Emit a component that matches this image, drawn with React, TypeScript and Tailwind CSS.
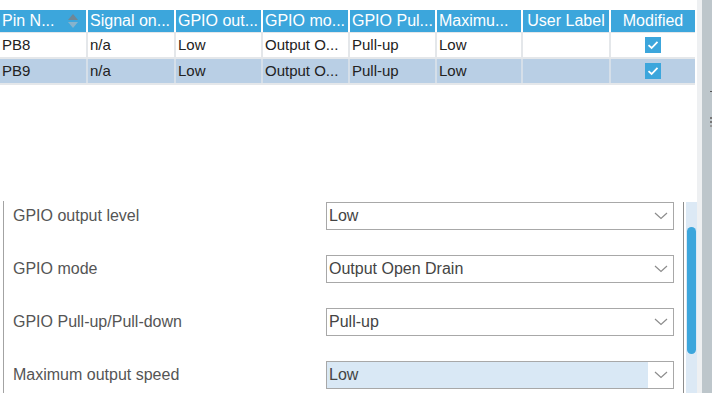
import React from "react";

// Column widths for the pin table (px)
const COLS = [
  { title: "Pin N...", w: "w-[86px]", align: "text-left", sort: true },
  { title: "Signal on...", w: "w-[86px]", align: "text-left" },
  { title: "GPIO out...", w: "w-[85px]", align: "text-left" },
  { title: "GPIO mo...", w: "w-[85px]", align: "text-left" },
  { title: "GPIO Pul...", w: "w-[85px]", align: "text-left" },
  { title: "Maximu...", w: "w-[84px]", align: "text-left" },
  { title: "User Label", w: "w-[86px]", align: "text-center" },
  { title: "Modified", w: "w-[84px]", align: "text-center" },
];

const ROWS = [
  { cells: ["PB8", "n/a", "Low", "Output O...", "Pull-up", "Low", ""], selected: false },
  { cells: ["PB9", "n/a", "Low", "Output O...", "Pull-up", "Low", ""], selected: true },
];

const FIELDS = [
  { label: "GPIO output level", value: "Low", focus: false },
  { label: "GPIO mode", value: "Output Open Drain", focus: false },
  { label: "GPIO Pull-up/Pull-down", value: "Pull-up", focus: false },
  { label: "Maximum output speed", value: "Low", focus: true },
];

const SortIcon = () => (
  <svg width="10" height="14" viewBox="0 0 10 14" className="shrink-0">
    <path d="M5 0 L10 6 L0 6 Z" fill="#6f8796" />
    <path d="M0 8 L10 8 L5 14 Z" fill="#86b3cc" />
  </svg>
);

const CheckBox = () => (
  <div className="w-[16px] h-[16px] bg-[#3ca6dc] flex items-center justify-center">
    <svg width="12" height="10" viewBox="0 0 12 10">
      <path d="M1.5 5.2 L4.6 8 L10.5 1.8" fill="none" stroke="white" strokeWidth="1.8" />
    </svg>
  </div>
);

const Chevron = () => (
  <svg width="14" height="8" viewBox="0 0 14 8">
    <path d="M1 1 L7 6.5 L13 1" fill="none" stroke="#8c8c8c" strokeWidth="1.2" />
  </svg>
);

export default function App() {
  return (
    <div
      className="flex w-[712px] h-[393px] overflow-hidden bg-white"
      style={{ fontFamily: "'Liberation Sans', Arial, sans-serif" }}
    >
      <div className="w-[697px] flex flex-col">
        {/* Pin table */}
        <div className="pt-[10px] w-[695px]">
          <div className="flex gap-[2px] h-[22px] bg-white">
            {COLS.map((c) => (
              <div
                key={c.title}
                className={`${c.w} ${c.align} bg-[#3ca6dc] text-white text-[16px] leading-[22px] px-[2px] whitespace-nowrap overflow-hidden flex items-center ${
                  c.align === "text-center" ? "justify-center" : "justify-between"
                }`}
              >
                <span>{c.title}</span>
                {c.sort && <span className="mr-[6px]"><SortIcon /></span>}
              </div>
            ))}
          </div>
          <div className="flex flex-col gap-[2px] pt-[1px] bg-[#e4e7ea] pb-[2px]">
            {ROWS.map((r) => (
              <div
                key={r.cells[0]}
                className={`flex gap-[2px] h-[24px] ${r.selected ? "bg-[#d5dfe9]" : "bg-[#e4e7ea]"}`}
              >
                {COLS.map((c, i) => (
                  <div
                    key={c.title}
                    className={`${c.w} ${r.selected ? "bg-[#b9cfe5]" : "bg-white"} text-[#222] text-[15px] leading-[24px] px-[2px] whitespace-nowrap overflow-hidden flex items-center ${
                      i === 7 ? "justify-center" : ""
                    }`}
                  >
                    {i === 7 ? <CheckBox /> : r.cells[i]}
                  </div>
                ))}
              </div>
            ))}
          </div>
        </div>

        {/* Properties form */}
        <div className="mt-[116px] flex flex-1">
          <div className="ml-[3px] w-[680px] border-l border-[#a3a3a3] pl-[9px] pr-[9px] pt-[1px] flex flex-col gap-[25px]">
            {FIELDS.map((f) => (
              <div key={f.label} className="flex items-center justify-between h-[28px]">
                <span className="text-[16px] text-[#555]">{f.label}</span>
                <div className="w-[348px] h-[28px] border border-[#a8a8a8] flex items-stretch">
                  <div
                    className={`flex-1 flex items-center pl-[2px] text-[16px] text-[#444] ${
                      f.focus ? "bg-[#d9e8f5]" : "bg-white"
                    }`}
                  >
                    {f.value}
                  </div>
                  <div className="w-[25px] bg-white flex items-center justify-center">
                    <Chevron />
                  </div>
                </div>
              </div>
            ))}
          </div>
          {/* vertical scrollbar */}
          <div className="flex-1 border-l border-[#8d8d8d] pl-[2px] mt-[1px]">
            <div className="w-[11px] h-full bg-[#dce9f5] pt-[25px] px-[1px]">
              <div className="w-[9px] h-[127px] rounded-full bg-[#3ca6dc]" />
            </div>
          </div>
        </div>
      </div>
      <div className="w-[5px] bg-[#eef0f2]" />
      <div className="w-[10px] bg-[#bdc6cb] flex flex-col items-end">
        <div className="mt-[91px] w-[2px] h-[1px] bg-[#555]" />
        <div className="mt-[25px] w-[2px] h-[2px] bg-[#777]" />
        <div className="mt-[2px] w-[2px] h-[2px] bg-[#777]" />
        <div className="mt-[2px] w-[2px] h-[2px] bg-[#999]" />
      </div>
    </div>
  );
}
